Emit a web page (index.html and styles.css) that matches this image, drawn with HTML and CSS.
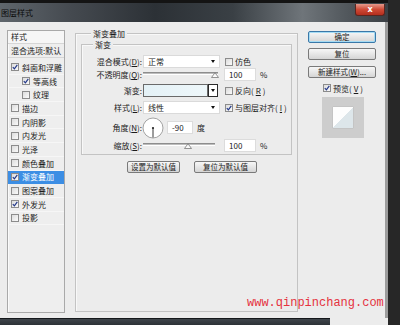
FILE: index.html
```html
<!DOCTYPE html>
<html>
	<head>
		<meta charset="UTF-8">
		<title>图层样式</title>
		<link rel="stylesheet" href="styles.css">
	</head>
	<body>
		<div class="screen">
			<div class="window">
				<div class="titlebar">
					<span class="title">图层样式</span>
					<span class="close">x</span>
				</div>
				<div class="dialog">
					<!-- 左侧样式列表 -->
					<div class="styles-list">
						<div class="list-head">样式</div>
						<div class="list-blend">混合选项:默认</div>
						<ul class="fx">
							<li><span class="cb on"><svg viewBox="0 0 6 6"><path d="M0.8 3.1 L2.4 4.9 L5.3 0.8"/></svg></span>斜面和浮雕</li>
							<li class="sub"><span class="cb on"><svg viewBox="0 0 6 6"><path d="M0.8 3.1 L2.4 4.9 L5.3 0.8"/></svg></span>等高线</li>
							<li class="sub"><span class="cb"></span>纹理</li>
							<li><span class="cb"></span>描边</li>
							<li><span class="cb"></span>内阴影</li>
							<li><span class="cb"></span>内发光</li>
							<li><span class="cb"></span>光泽</li>
							<li><span class="cb"></span>颜色叠加</li>
							<li class="sel"><span class="cb on"><svg viewBox="0 0 6 6"><path d="M0.8 3.1 L2.4 4.9 L5.3 0.8"/></svg></span>渐变叠加</li>
							<li><span class="cb"></span>图案叠加</li>
							<li><span class="cb on"><svg viewBox="0 0 6 6"><path d="M0.8 3.1 L2.4 4.9 L5.3 0.8"/></svg></span>外发光</li>
							<li><span class="cb"></span>投影</li>
						</ul>
					</div>

					<!-- 渐变叠加 设置 -->
					<div class="group outer">
						<div class="group-title">渐变叠加</div>
						<div class="group inner">
							<div class="group-title">渐变</div>

							<div class="row r1">
								<span class="lbl">混合模式(<u>D</u>):</span>
								<div class="select"><span>正常</span><i class="arrow"></i></div>
								<span class="check"><span class="cb"></span>仿色</span>
							</div>

							<div class="row r2">
								<span class="lbl">不透明度(<u>Q</u>):</span>
								<div class="slider"><div class="track"></div><svg class="thumb" style="left:68px" width="8" height="6" viewBox="0 0 8 6"><path d="M0.5 5.5 L4 0.7 L7.5 5.5 Z"/></svg></div>
								<span class="num">100</span>
								<span class="unit">%</span>
							</div>

							<div class="row r3">
								<span class="lbl">渐变:</span>
								<div class="grad"></div>
								<div class="grad-btn"><i class="arrow"></i></div>
								<span class="check"><span class="cb"></span>反向(<u>R</u>)</span>
							</div>

							<div class="row r4">
								<span class="lbl">样式(<u>L</u>):</span>
								<div class="select"><span>线性</span><i class="arrow"></i></div>
								<span class="check"><span class="cb on"><svg viewBox="0 0 6 6"><path d="M0.8 3.1 L2.4 4.9 L5.3 0.8"/></svg></span>与图层对齐(<u>I</u>)</span>
							</div>

							<div class="row r5">
								<span class="lbl">角度(<u>N</u>):</span>
								<svg class="dial" width="22" height="22" viewBox="0 0 22 22">
									<circle cx="11" cy="11" r="10" fill="#fff" stroke="#a3a3a3"/>
									<line x1="11" y1="11" x2="11" y2="20.5" stroke="#3a3a3a"/>
									<circle cx="11" cy="11" r="1.1" fill="#222"/>
								</svg>
								<span class="num short">-90</span>
								<span class="unit">度</span>
							</div>

							<div class="row r6">
								<span class="lbl">缩放(<u>S</u>):</span>
								<div class="slider short"><div class="track"></div><svg class="thumb" style="left:41px" width="8" height="6" viewBox="0 0 8 6"><path d="M0.5 5.5 L4 0.7 L7.5 5.5 Z"/></svg></div>
								<span class="num far">100</span>
								<span class="unit">%</span>
							</div>
						</div>

						<div class="defaults">
							<span class="btn b-set">设置为默认值</span>
							<span class="btn b-reset">复位为默认值</span>
						</div>
					</div>

					<!-- 右侧按钮 -->
					<div class="side">
						<span class="btn default">确定</span>
						<span class="btn">复位</span>
						<span class="btn">新建样式(<u>W</u>)...</span>
						<div class="preview-check"><span class="cb on"><svg viewBox="0 0 6 6"><path d="M0.8 3.1 L2.4 4.9 L5.3 0.8"/></svg></span>预览(<u>V</u>)</div>
						<div class="preview"><div class="swatch"></div></div>
					</div>
				</div>
				<div class="bottom"><div class="bottom-dark"></div></div>
			</div>
			<div class="edge"></div>
			<div class="watermark">www.qinpinchang.com</div>
		</div>
	</body>
</html>
```

FILE: styles.css
```css
*{
	margin: 0;
	padding: 0;
	box-sizing: border-box;
}
body{
	width: 400px;
	height: 325px;
	overflow: hidden;
	background-color: #262626;
	font-family: "Noto Sans CJK SC", "Noto Sans", sans-serif;
	font-size: 8px;
	color: #1b1b1b;
}
u{
	text-decoration: underline;
}
.screen{
	position: relative;
	display: flex;
	height: 325px;
}
.window{
	width: 388px;
	display: flex;
	flex-direction: column;
}
.edge{
	flex: 1;
	background-color: #272727;
}

/* 标题栏 */
.titlebar{
	height: 22px;
	border-top: 3px solid #141414;
	background: linear-gradient(to right, #5f666c 0%, #454a50 18%, #2c3136 40%, #3a4045 60%, #6f757a 78%, #555b60 88%, #3a3f44 100%);
	display: flex;
	justify-content: space-between;
	align-items: flex-start;
}
.title{
	line-height: 19px;
	padding-left: 1px;
	color: #0a0a0a;
}
.close{
	width: 30px;
	height: 12px;
	margin: 1px 3px 0 0;
	border: 1px solid #5a2620;
	border-top: 0;
	border-radius: 0 0 3px 3px;
	background: linear-gradient(#e59a8c, #cf4a36 50%, #b32e1d);
	color: #fff;
	font: bold 8px "DejaVu Sans", sans-serif;
	text-align: center;
	line-height: 11px;
}

/* 对话框主体 */
.dialog{
	flex: 1;
	background-color: #ececec;
	display: flex;
	align-items: flex-start;
	padding: 8px 0 0 7px;
	border-right: 3px solid #9c9c9c;
}
.bottom{
	height: 7px;
	background-color: #ececec;
}
.bottom-dark{
	width: 330px;
	height: 7px;
	border-top: 1px solid #15181b;
	background: linear-gradient(#3f454b, #2d3237);
}

/* 左侧列表 */
.styles-list{
	width: 58px;
	height: 283px;
	border: 1px solid #a9a9a9;
	background-color: #eeeeee;
	box-shadow: inset 1px 1px 0 #fafafa;
}
.list-head{
	height: 13px;
	line-height: 12px;
	padding-left: 3px;
	background-color: #f6f6f6;
	border-bottom: 1px solid #d6d6d6;
}
.list-blend{
	height: 14px;
	line-height: 13px;
	padding-left: 3px;
	border-bottom: 1px solid #d6d6d6;
}
.fx{
	list-style: none;
	margin-top: 3px;
}
.fx li{
	height: 13.7px;
	display: flex;
	align-items: center;
	gap: 3px;
	padding-left: 3px;
	border-bottom: 1px solid #f6f6f6;
}
.fx li.sub{
	padding-left: 14px;
}
.fx li.sel{
	background-color: #3c8ee4;
	color: #fff;
	border-bottom-color: #3c8ee4;
}

/* 复选框 */
.cb{
	flex: none;
	width: 8px;
	height: 8px;
	border: 1px solid #8c8c8c;
	background: linear-gradient(135deg, #dcdcdc, #fafafa);
	display: inline-flex;
}
.cb svg{
	width: 6px;
	height: 6px;
}
.cb svg path{
	fill: none;
	stroke: #24398a;
	stroke-width: 1.2;
}

/* 分组框 */
.group{
	border: 1px solid #c3c3c3;
	box-shadow: inset 1px 1px 0 #f8f8f8;
}
.group-title{
	display: block;
	width: max-content;
	line-height: 11px;
	margin-top: -6px;
	padding: 0 2px;
	background-color: #ececec;
}
.outer{
	width: 223px;
	height: 279px;
	margin: 3px 0 0 10px;
	padding: 0 5px;
}
.outer > .group-title{
	margin-left: 10px;
}
.inner{
	margin-top: 5px;
	padding-bottom: 2px;
}
.inner > .group-title{
	margin-left: 11px;
	margin-bottom: 5px;
}

/* 表单行 */
.row{
	display: flex;
	align-items: center;
	height: 13px;
}
.r3{ margin-top: 3px; }
.r4{ margin-top: 4px; }
.r5{ margin-top: 3px; height: 21px; }
.r6{ margin-top: 1px; }
.lbl{
	width: 61px;
	padding-right: 1px;
	text-align: right;
	white-space: nowrap;
}
.select{
	width: 77px;
	height: 13px;
	background-color: #fff;
	border: 1px solid #dadada;
	display: flex;
	align-items: center;
	padding: 0 4px 0 4px;
}
.arrow{
	width: 0;
	height: 0;
	margin-left: auto;
	border-left: 2.5px solid transparent;
	border-right: 2.5px solid transparent;
	border-top: 3px solid #111;
}
.check{
	display: flex;
	align-items: center;
	gap: 2px;
	margin-left: 5px;
	white-space: nowrap;
}
.slider{
	position: relative;
	width: 75px;
	height: 13px;
	display: flex;
	align-items: center;
}
.slider.short{
	width: 72px;
}
.track{
	width: 100%;
	height: 3px;
	margin-top: -3px;
	border-top: 1px solid #8d8d8d;
	border-bottom: 1px solid #fff;
	background-color: #bdbdbd;
}
.thumb{
	position: absolute;
	top: 4px;
}
.thumb path{
	fill: #fafafa;
	stroke: #7a7a7a;
	stroke-width: 0.8;
}
.num{
	width: 32px;
	height: 13px;
	margin-left: 6px;
	padding-left: 4px;
	line-height: 12px;
	background-color: #fff;
	border: 1px solid #dcdcdc;
}
.num.short{
	width: 26px;
	margin-left: 3px;
}
.num.far{
	margin-left: 9px;
}
.unit{
	margin-left: 4px;
}
.grad{
	width: 65px;
	height: 13px;
	border: 1px solid #6a6a6a;
	background: linear-gradient(to right, #e4f1f6, #eef7fa);
}
.grad-btn{
	width: 10px;
	height: 13px;
	border: 1px solid #2a2a2a;
	border-left-width: 1px;
	background-color: #fff;
	display: flex;
	align-items: center;
	justify-content: center;
}
.grad-btn .arrow{
	margin: 0;
}
.r3 .check{
	margin-left: 7px;
}
.dial{
	margin-left: -1px;
}

/* 按钮 */
.btn{
	display: block;
	height: 12px;
	border: 1px solid #7a7a7a;
	border-radius: 2px;
	background: linear-gradient(#f7f7f7, #e6e6e6 50%, #d5d5d5);
	font-size: 7.5px;
	line-height: 10px;
	text-align: center;
	white-space: nowrap;
}
.btn.default{
	border-color: #3a78a8;
	box-shadow: inset 0 0 0 1px #a6dcf4;
}
.defaults{
	display: flex;
	gap: 14px;
	margin-top: 6px;
	padding-left: 46px;
}
.b-set{
	width: 53px;
}
.b-reset{
	width: 63px;
}

/* 右侧 */
.side{
	width: 68px;
	margin: 1px 0 0 10px;
	display: flex;
	flex-direction: column;
	gap: 5px;
}
.side .btn:nth-child(3){
	margin-top: 1px;
}
.preview-check{
	display: flex;
	align-items: center;
	justify-content: center;
	gap: 2px;
	height: 10px;
	padding-left: 2px;
}
.preview{
	width: 42px;
	height: 41px;
	margin: -1px 0 0 14px;
	background-color: #cdcdcd;
	padding-top: 10px;
}
.swatch{
	width: 20px;
	height: 21px;
	margin: 0 auto;
	background: linear-gradient(135deg, #fdfdfd 50%, #dde6ea 50%);
	box-shadow: 0 0 1px #9a9a9a;
}

/* 水印 */
.watermark{
	position: absolute;
	left: 247px;
	top: 297px;
	font: 12px "Liberation Mono", monospace;
	line-height: 12px;
	color: #e5323e;
}
```
